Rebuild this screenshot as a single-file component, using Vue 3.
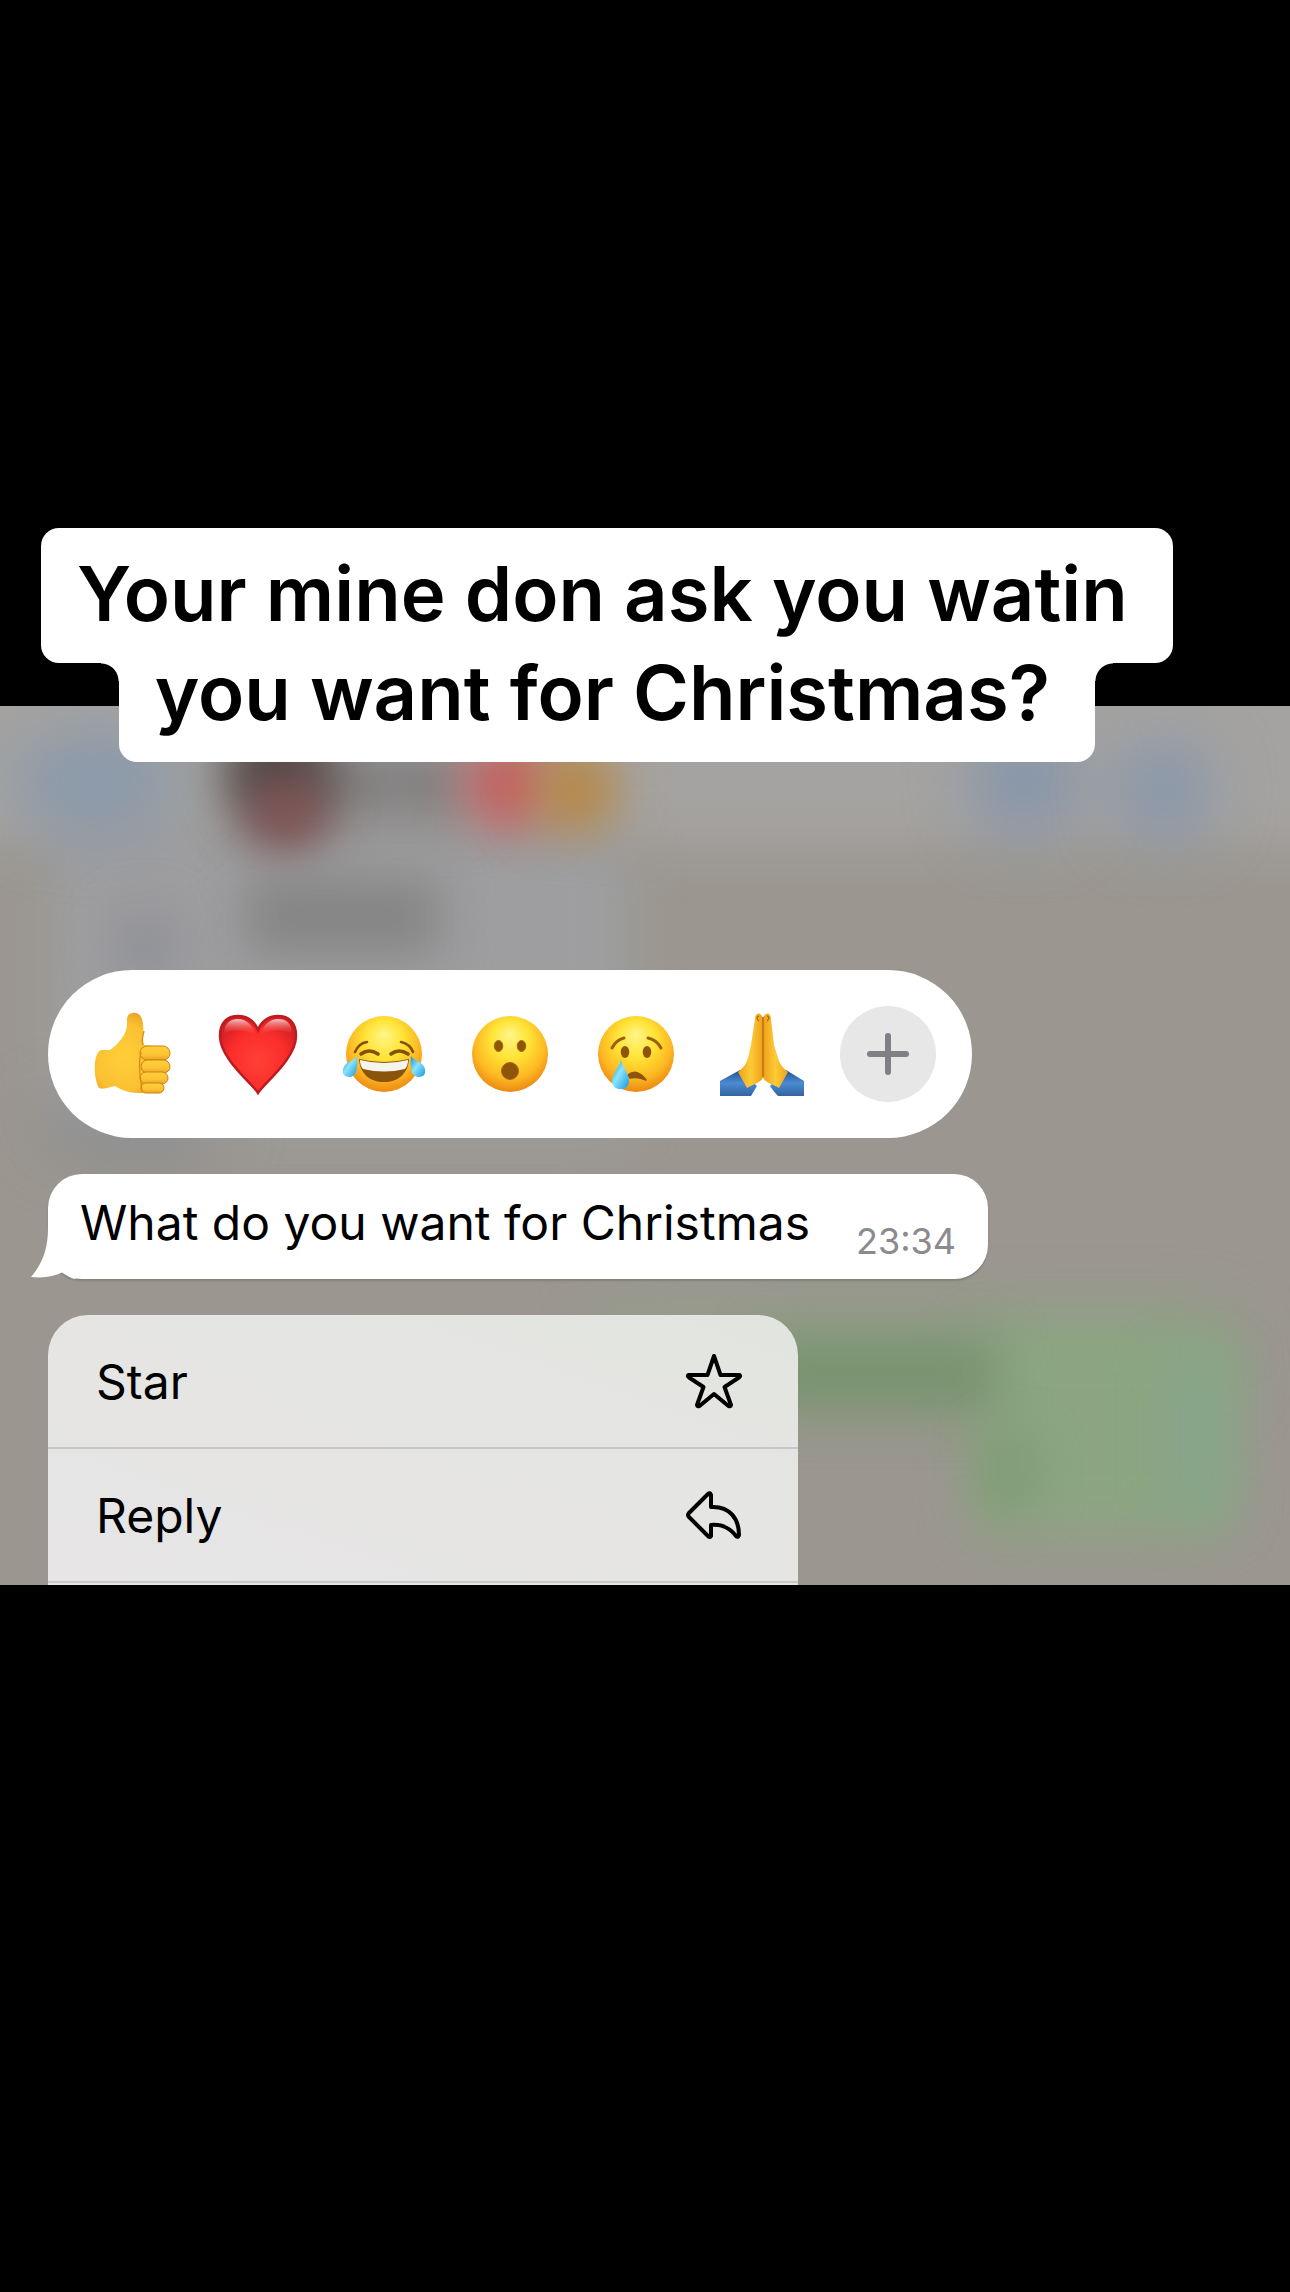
<template>
  <main class="story">
    <h1 class="caption">
      <span class="caption-line first">Your mine don ask you watin</span>
      <span class="caption-line second">you want for Christmas?</span>
    </h1>

    <section class="chat">
      <svg class="backdrop" viewBox="0 0 1290 878" preserveAspectRatio="none" aria-hidden="true">
        <defs>
          <filter id="wide" x="-100%" y="-200%" width="300%" height="500%" color-interpolation-filters="sRGB"><feGaussianBlur stdDeviation="32" /></filter>
          <filter id="soft" x="-100%" y="-200%" width="300%" height="500%" color-interpolation-filters="sRGB"><feGaussianBlur stdDeviation="24" /></filter>
        </defs>
        <rect width="1290" height="878" fill="#9b9790" />
        <rect x="-100" y="-100" width="1490" height="240" fill="#a5a3a1" filter="url(#soft)" />
        <rect x="50" y="120" width="580" height="310" rx="30" fill="#9e9ea0" filter="url(#soft)" />
        <ellipse cx="95" cy="76" rx="84" ry="50" fill="#8999ab" filter="url(#wide)" />
        <rect x="280" y="40" width="190" height="76" fill="#838181" filter="url(#soft)" />
        <ellipse cx="278" cy="64" rx="54" ry="58" fill="#4e4846" filter="url(#soft)" />
        <ellipse cx="287" cy="108" rx="40" ry="38" fill="#845454" filter="url(#soft)" />
        <ellipse cx="508" cy="78" rx="44" ry="46" fill="#c65e5e" filter="url(#soft)" />
        <ellipse cx="576" cy="84" rx="42" ry="44" fill="#b68847" filter="url(#soft)" />
        <ellipse cx="1024" cy="76" rx="52" ry="50" fill="#8294ab" filter="url(#wide)" />
        <ellipse cx="1164" cy="84" rx="44" ry="46" fill="#8295ac" filter="url(#wide)" />
        <ellipse cx="145" cy="240" rx="32" ry="36" fill="#8e8f95" filter="url(#soft)" />
        <rect x="246" y="172" width="194" height="76" fill="#848484" filter="url(#soft)" />
        <ellipse cx="130" cy="420" rx="90" ry="24" fill="#88898c" filter="url(#wide)" />
        <rect x="600" y="616" width="630" height="70" rx="20" fill="#8da283" filter="url(#wide)" />
        <rect x="970" y="622" width="264" height="206" rx="30" fill="#8ca580" filter="url(#soft)" />
        <rect x="760" y="632" width="236" height="72" fill="#79926f" filter="url(#soft)" />
        <ellipse cx="1008" cy="766" rx="26" ry="38" fill="#7d9872" filter="url(#soft)" />
        <rect x="1168" y="650" width="58" height="160" fill="#86a58c" filter="url(#soft)" />
      </svg>

      <div class="overlay">
        <div class="reactions" role="toolbar" aria-label="Reactions">
          <div class="emoji-list">
            <button class="emoji" type="button" aria-label="Thumbs up">
              <svg viewBox="-2 1 84 84">
                <path d="M9 39C1 42 1 67 7 77C12 79 18 76 23 75C29 79 37 82 46 82H64C70 81 72 77 70 74L74 45L72 36L52 34C50 27 52 21 51 13C50 4 46 1 40 2C34 3 35 9 35 15C34 25 24 35 18 39Z" fill="url(#hand)" />
                <g fill="url(#finger)" stroke="#cf8112" stroke-width="1">
                  <rect x="48" y="35" width="30" height="14" rx="7" />
                  <rect x="49" y="49" width="29" height="13" rx="6.5" />
                  <rect x="48" y="61" width="28" height="12" rx="6" />
                  <rect x="49" y="72" width="23" height="10" rx="5" />
                </g>
                <path d="M51 34C49 29 51 25 52 20M49 41C46 52 48 64 50 80" fill="none" stroke="#d98d18" stroke-width="1.3" />
              </svg>
            </button>
            <button class="emoji" type="button" aria-label="Heart">
              <svg viewBox="0 0 84 84">
                <path d="M42 81C37 72 4 47 4 24C4 10 12 4 22 4C32 4 39 10 42 18C45 10 52 4 62 4C72 4 80 10 80 24C80 47 47 72 42 81Z" fill="url(#heart)" stroke="#bd1b20" stroke-width="2.5" />
                <path d="M8 22C8 11 15 7 22 7C30 7 37 13 40 23C29 18 17 16 8 22Z" fill="url(#gloss)" />
                <path d="M44 23C47 13 54 7 62 7C70 7 76 11 76 22C66 16 54 18 44 23Z" fill="url(#gloss)" />
              </svg>
            </button>
            <button class="emoji" type="button" aria-label="Face with tears of joy">
              <svg viewBox="0 0 84 84">
                <circle cx="42" cy="42" r="38" fill="url(#face)" />
                <g fill="none" stroke="#855008" stroke-width="2.6" stroke-linecap="round">
                  <path d="M13 40Q17 31 25 30M59 30Q68 32 71 40" />
                  <path d="M19 42Q27 36 36 42M49 42Q57 36 66 42" stroke-width="3.6" />
                </g>
                <path d="M17 47Q42 53 67 47C66 62 56 70 42 70C28 70 18 62 17 47Z" fill="#8a550b" />
                <path d="M18 48Q42 54 66 48Q66 54 63 57Q42 62 21 57Q18 54 18 48Z" fill="#f6f4ef" />
                <path d="M15 44C16 55 15 65 7 65C-1 65 -1 56 5 51C9 49 13 47 15 44Z" fill="url(#tear)" />
                <path d="M69 44C68 55 69 65 77 65C85 65 85 56 79 51C75 49 71 47 69 44Z" fill="url(#tear)" />
              </svg>
            </button>
            <button class="emoji" type="button" aria-label="Surprised face">
              <svg viewBox="0 0 84 84">
                <circle cx="42" cy="42" r="38" fill="url(#face)" />
                <g fill="#8d5509" stroke="#a96a0a" stroke-width="1">
                  <ellipse cx="30.5" cy="34" rx="4.3" ry="5.5" />
                  <ellipse cx="53.5" cy="34" rx="4.3" ry="5.5" />
                  <circle cx="42" cy="59" r="8.5" />
                </g>
              </svg>
            </button>
            <button class="emoji" type="button" aria-label="Crying face">
              <svg viewBox="0 0 84 84">
                <circle cx="42" cy="42" r="38" fill="url(#face)" />
                <g fill="#8d5509">
                  <ellipse cx="31" cy="40" rx="4.3" ry="6" />
                  <ellipse cx="53" cy="40" rx="4.3" ry="6" />
                  <path d="M34 63Q43 56 52 68Q44 64 36 66Z" stroke="#8d5509" stroke-width="1.6" stroke-linejoin="round" />
                </g>
                <path d="M18 36Q22 28 30 26M54 26Q63 28 67 36" fill="none" stroke="#9a6109" stroke-width="3" stroke-linecap="round" />
                <path d="M27 48C29 56 35 61 35 69C35 80 18 80 18 69C18 61 25 56 27 48Z" fill="url(#tear)" />
              </svg>
            </button>
            <button class="emoji" type="button" aria-label="Folded hands">
              <svg viewBox="0 0 84 84">
                <path d="M0 69L20 58L37 74Q34 79 31 84H0Z" fill="url(#sleeve)" />
                <path d="M84 69L66 58L50 74Q53 79 58 84H84Z" fill="url(#sleeve)" />
                <path d="M43 6C40 -1 35 1 35 7L31 33L28 46C26 53 22 57 18 60L27 76C34 72 42 70 43 65Z" fill="url(#palm)" />
                <path d="M43 6C46 -1 51 1 51 7L54 33L58 46C60 53 64 57 68 60L59 76C52 72 44 70 43 65Z" fill="url(#palm)" />
                <path d="M43 5V65M39 4Q35 5 39 9M47 4Q51 5 47 9" fill="none" stroke="#b96b06" stroke-width="1.4" />
              </svg>
            </button>
          </div>
          <button class="more" type="button" aria-label="More reactions">
            <svg viewBox="0 0 48 48"><path d="M24 6V42M6 24H42" /></svg>
          </button>
        </div>

        <article class="bubble">
          <svg class="tail" viewBox="0 0 44 60" aria-hidden="true"><path d="M17 0V8C17 28 12 43 0 57Q19 59 32 52Q38 58 44 59V0Z" /></svg>
          <p class="message">What do you want for Christmas</p>
          <time class="time">23:34</time>
        </article>

        <div class="menu" role="menu">
          <button v-for="item in items" :key="item.label" class="menu-item" type="button" role="menuitem">
            <span>{{ item.label }}</span>
            <svg class="menu-icon" viewBox="0 0 60 60" aria-hidden="true"><path :d="item.icon" /></svg>
          </button>
        </div>
      </div>
    </section>

    <!-- shared emoji gradients -->
    <svg class="defs" aria-hidden="true">
      <defs>
        <radialGradient id="face" cx="50%" cy="40%" r="62%" fy="24%">
          <stop offset="0" stop-color="#fff58a" />
          <stop offset="0.4" stop-color="#ffe436" />
          <stop offset="0.75" stop-color="#fdb823" />
          <stop offset="1" stop-color="#e98410" />
        </radialGradient>
        <radialGradient id="hand" cx="40%" cy="55%" r="60%">
          <stop offset="0" stop-color="#ffcf38" />
          <stop offset="0.7" stop-color="#fbc033" />
          <stop offset="1" stop-color="#e9a023" />
        </radialGradient>
        <linearGradient id="finger" x1="0" y1="0" x2="0" y2="1">
          <stop offset="0" stop-color="#ffd03b" />
          <stop offset="0.6" stop-color="#fdc435" />
          <stop offset="1" stop-color="#eba420" />
        </linearGradient>
        <radialGradient id="heart" cx="50%" cy="58%" r="58%">
          <stop offset="0" stop-color="#ff4037" />
          <stop offset="0.65" stop-color="#fb2d2b" />
          <stop offset="1" stop-color="#d42024" />
        </radialGradient>
        <linearGradient id="gloss" x1="0" y1="0" x2="0" y2="1">
          <stop offset="0" stop-color="#fff" stop-opacity="0.75" />
          <stop offset="1" stop-color="#ff4a40" stop-opacity="0" />
        </linearGradient>
        <linearGradient id="tear" x1="0" y1="0" x2="1" y2="1">
          <stop offset="0" stop-color="#1b8ed6" />
          <stop offset="0.45" stop-color="#8be4fc" />
          <stop offset="1" stop-color="#1597e0" />
        </linearGradient>
        <linearGradient id="sleeve" x1="0" y1="0" x2="0" y2="1">
          <stop offset="0" stop-color="#23508c" />
          <stop offset="0.5" stop-color="#4a8bd4" />
          <stop offset="1" stop-color="#33659f" />
        </linearGradient>
        <linearGradient id="palm" x1="0" y1="0" x2="1" y2="0">
          <stop offset="0" stop-color="#eda01b" />
          <stop offset="0.5" stop-color="#fecb35" />
          <stop offset="1" stop-color="#eda01b" />
        </linearGradient>
      </defs>
    </svg>
  </main>
</template>

<script setup>
const items = [
  {
    label: 'Star',
    icon: 'M30 5L36.5 24H55.5Q57 25 55 26.5L40.5 36L47 54Q46.5 56 44.5 55L30 43L15.5 55Q13.5 56 13 54L19.5 36L5 26.5Q3 25 4.5 24H23.5Z'
  },
  {
    label: 'Reply',
    icon: 'M27 10V22C46 21 55 34 55 50Q54 53 52 51C46 43 39 39 27 40V51Q26 53 24 51L5 32Q3 30 5 28L24 9Q26 7 27 10Z'
  }
]
</script>

<style>
body {
  margin: 0;
  background: #000;
}
</style>

<style scoped>
.story {
  box-sizing: border-box;
  min-height: 100vh;
  padding-top: 528px;
  background: #000;
  color: #000;
  font-family: Inter, "Liberation Sans", sans-serif;
}

.caption {
  position: relative;
  z-index: 2;
  display: flex;
  flex-direction: column;
  align-items: center;
  width: fit-content;
  margin: 0 0 -56px 41px;
  font-size: 76px;
  font-weight: 600;
  line-height: 99px;
  white-space: nowrap;
}

.caption-line {
  padding: 0 45px 0 36px;
  background: #fff;
}

.first {
  padding-top: 16px;
  padding-bottom: 20px;
  border-radius: 18px;
}

.second {
  position: relative;
  margin-top: -20px;
  padding-bottom: 20px;
  border-radius: 0 0 18px 18px;
}

.second::before,
.second::after {
  content: "";
  position: absolute;
  top: 20px;
  width: 18px;
  height: 18px;
}

.second::before {
  right: 100%;
  background: radial-gradient(circle at 0 100%, transparent 17px, #fff 18px);
}

.second::after {
  left: 100%;
  background: radial-gradient(circle at 100% 100%, transparent 17px, #fff 18px);
}

.chat {
  position: relative;
  height: 879px;
  overflow: hidden;
  background: #9b9790;
}

.backdrop {
  position: absolute;
  inset: 0;
  width: 100%;
  height: 100%;
}

.overlay {
  position: relative;
  display: flex;
  flex-direction: column;
  align-items: flex-start;
  gap: 36px;
  padding: 264px 48px 0;
}

button {
  border: 0;
  padding: 0;
  background: none;
  color: inherit;
  font: inherit;
  cursor: pointer;
}

.reactions {
  display: flex;
  align-items: center;
  gap: 36px;
  padding: 36px 36px 36px 42px;
  border-radius: 84px;
  background: #fff;
}

.emoji-list {
  display: flex;
  gap: 42px;
}

.emoji {
  width: 84px;
  height: 84px;
}

.emoji svg {
  display: block;
  overflow: visible;
}

.more {
  display: grid;
  place-items: center;
  width: 96px;
  height: 96px;
  border-radius: 50%;
  background: #e7e7e7;
}

.more svg {
  width: 48px;
  fill: none;
  stroke: #7f7f84;
  stroke-width: 6;
  stroke-linecap: round;
}

.bubble {
  position: relative;
  display: flex;
  gap: 46px;
  padding: 0 32px;
  border-radius: 34px;
  background: #fff;
  box-shadow: 0 2px 2px rgba(0, 0, 0, 0.15);
}

.tail {
  position: absolute;
  left: -17px;
  bottom: -1px;
  width: 44px;
  height: 60px;
  fill: #fff;
}

.message {
  margin: 0;
  padding-bottom: 8px;
  font-size: 48px;
  line-height: 97px;
}

.time {
  align-self: flex-end;
  color: #8b8b8f;
  font-size: 36px;
  line-height: 76px;
}

.menu {
  display: flex;
  flex-direction: column;
  width: 750px;
  max-width: 100%;
  height: 320px;
  overflow: hidden;
  border-radius: 40px;
  background: linear-gradient(200deg, #e1e5de 0, #e5e5e3 30%, #e7e5e6 100%);
}

.menu-item {
  display: flex;
  align-items: center;
  justify-content: space-between;
  height: 134px;
  box-sizing: border-box;
  flex: none;
  padding: 0 54px 0 48px;
  border-bottom: 2px solid #c8c8c7;
  font-size: 48px;
  text-align: left;
}

.menu-icon {
  width: 60px;
  height: 60px;
  fill: none;
  stroke: #000;
  stroke-width: 4;
  stroke-linejoin: round;
}

.defs {
  position: absolute;
  width: 0;
  height: 0;
}
</style>
